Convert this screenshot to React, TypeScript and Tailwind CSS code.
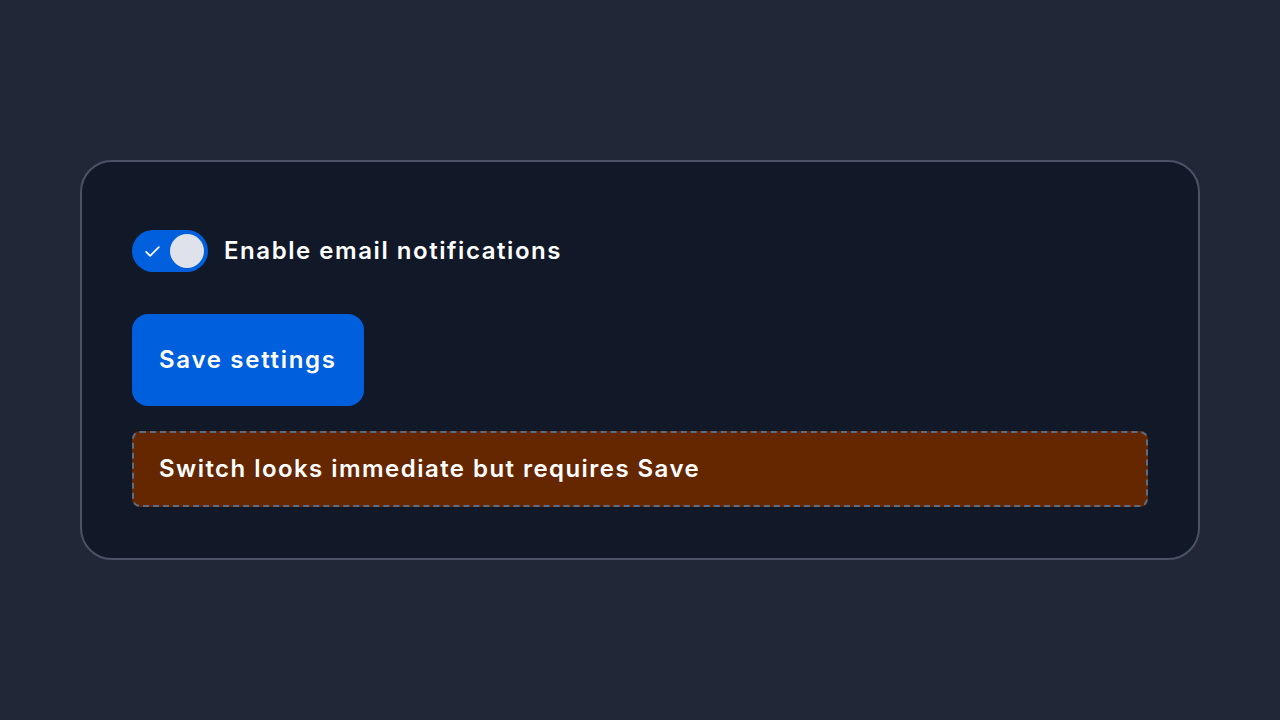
import React, { useState } from 'react';

export default function App() {
  const [enabled, setEnabled] = useState(true);

  return (
    <div className="flex h-[720px] w-full items-center justify-center bg-[#222738] font-['Inter',sans-serif] text-white">
      <div className="flex h-[400px] w-[1120px] flex-col rounded-[32px] border-2 border-[#4a5366] bg-[#111827] px-[50px] pt-[68px]">
        {/* Toggle row */}
        <div className="flex items-center gap-4">
          <button
            onClick={() => setEnabled(!enabled)}
            className="relative flex h-[42px] w-[76px] items-center rounded-full bg-[#005fdd] px-1"
          >
            <svg className="absolute left-[11px] h-[19px] w-[19px]" viewBox="0 0 24 24" fill="none" stroke="white" strokeWidth="2.2" strokeLinecap="round" strokeLinejoin="round">
              <path d="M4 12.5l5 5L20 6.5" />
            </svg>
            <span className="ml-auto h-[34px] w-[34px] rounded-full bg-[#dfe2ea]"></span>
          </button>
          <span className="text-[24px] font-semibold tracking-[1.55px]">Enable email notifications</span>
        </div>

        {/* Save */}
        <button className="mt-[42px] h-[92px] w-[232px] rounded-2xl bg-[#005fdd] pl-[27px] text-left text-[24px] font-semibold tracking-[1.7px]">
          Save settings
        </button>

        {/* Note */}
        <div className="mt-[25px] flex h-[76px] items-center rounded-lg border-2 border-dashed border-[#5f6b80] bg-[#652700] px-[25px] text-[24px] font-semibold tracking-[1.45px]">
          Switch looks immediate but requires Save
        </div>
      </div>
    </div>
  );
}
